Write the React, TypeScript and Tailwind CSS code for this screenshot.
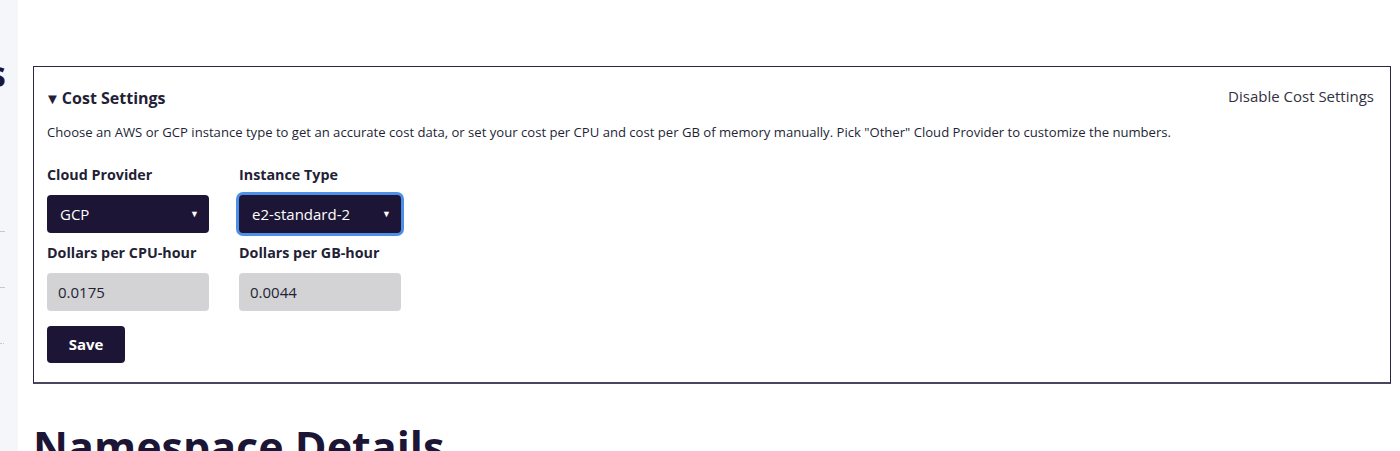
import React from 'react';

const Select: React.FC<{ value: string; focused?: boolean }> = ({ value, focused }) => (
  <div
    className={`w-[162px] h-[38px] rounded-[4px] bg-[#1d1535] text-white text-[15px] flex items-center justify-between pl-[13px] pr-[10px] ${
      focused ? 'ring-[3px] ring-[#4f8fe6]' : ''
    }`}
  >
    <span>{value}</span>
    <span className="text-[9px]">▼</span>
  </div>
);

const Field: React.FC<{ label: string; children: React.ReactNode }> = ({ label, children }) => (
  <div className="flex flex-col w-[162px]">
    <label className="font-bold text-[14.3px] leading-[20px] mb-[10px] text-[#231f36]">{label}</label>
    {children}
  </div>
);

const NumberInput: React.FC<{ value: string }> = ({ value }) => (
  <div className="w-[162px] h-[38px] rounded-[4px] bg-[#d3d3d5] text-[#231f36] text-[15px] flex items-center pl-[11px]">
    {value}
  </div>
);

export default function App() {
  return (
    <div className="flex w-[1400px] h-[451px] overflow-hidden bg-white text-[#231f36] font-['Open_Sans',sans-serif]">
      <aside className="w-[18px] shrink-0 bg-[#f5f6fa] overflow-hidden flex flex-col">
        <div className="w-[6px] h-[38px] mt-[55px] flex justify-end whitespace-nowrap text-[36px] font-bold leading-[38px] text-[#1d1535]">
          Settings
        </div>
        <div className="w-[5px] border-t border-[#c8c8d2] mt-[138px]" />
        <div className="w-[5px] border-t border-[#c8c8d2] mt-[55px]" />
        <div className="w-[4px] border-t border-dotted border-[#c8c8d2] mt-[55px]" />
      </aside>

      <main className="flex-1 pl-[15px] pr-[9px] pt-[66px]">
        <section className="border border-[#2b2742] border-b-2 border-b-[#4a4660] pl-[13px] pr-[16px] pt-[19px] pb-[19px]">
          <div className="flex items-start justify-between">
            <h3 className="font-bold text-[16px] leading-[22px] mt-[1px] flex items-center">
              <span className="text-[15px] -ml-[2px] mr-[2px]">▼</span>Cost Settings
            </h3>
            <button className="text-[15px] leading-[20px] text-[#333140]">Disable Cost Settings</button>
          </div>
          <p className="text-[13.1px] leading-[18px] mt-[14px] text-[#231f36]">
            Choose an AWS or GCP instance type to get an accurate cost data, or set your cost per CPU and cost per GB of
            memory manually. Pick "Other" Cloud Provider to customize the numbers.
          </p>

          <div className="flex gap-[30px] mt-[24px]">
            <Field label="Cloud Provider">
              <Select value="GCP" />
            </Field>
            <Field label="Instance Type">
              <Select value="e2-standard-2" focused />
            </Field>
          </div>

          <div className="flex gap-[30px] mt-[10px]">
            <Field label="Dollars per CPU-hour">
              <NumberInput value="0.0175" />
            </Field>
            <Field label="Dollars per GB-hour">
              <NumberInput value="0.0044" />
            </Field>
          </div>

          <button className="mt-[15px] w-[78px] h-[37px] rounded-[4px] bg-[#1d1535] text-white font-bold text-[15px]">
            Save
          </button>
        </section>

        <h1 className="mt-[37px] text-[43px] font-bold leading-[52px] text-[#1d1535]">Namespace Details</h1>
      </main>
    </div>
  );
}
